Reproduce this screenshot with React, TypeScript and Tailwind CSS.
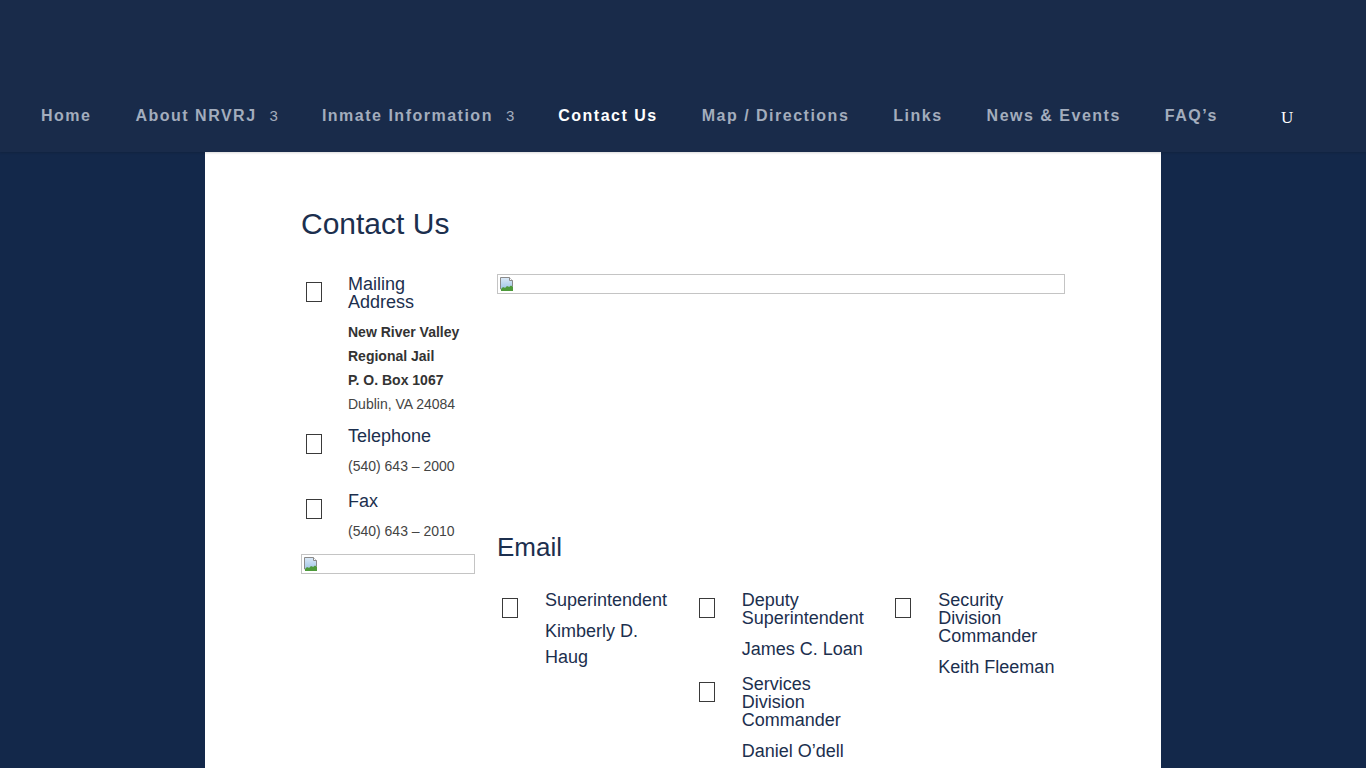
const navItems = [
	{ label: "Home" },
	{ label: "About NRVRJ", sub: true },
	{ label: "Inmate Information", sub: true },
	{ label: "Contact Us", active: true },
	{ label: "Map / Directions" },
	{ label: "Links" },
	{ label: "News & Events" },
	{ label: "FAQ’s" },
];

function BoxIcon() {
	return <span className="block w-[16px] h-[20px] border border-[#3a3a3a] bg-white" />;
}

function BrokenImage({ className }: { className?: string }) {
	return (
		<div className={`h-[20px] border border-[#c4c4c4] flex items-start ${className ?? ""}`}>
			<svg width="16" height="16" viewBox="0 0 16 16" className="mt-[1px] ml-[1px]">
				<defs>
					<linearGradient id="sky" x1="0" y1="0" x2="0" y2="1">
						<stop offset="0" stopColor="#dbe9f7" />
						<stop offset="1" stopColor="#9cc3e6" />
					</linearGradient>
				</defs>
				<path d="M1.5 1.5h9l3 3v6l-2 1.5-2-1-2 2-2-1-2 2-2-1z" fill="url(#sky)" stroke="#8a8a8a" />
				<path d="M2 13l2-2 2 1 2-2 2 1 2-1.5 2 1.5V15H2z" fill="#4d9a3a" />
				<path d="M10.5 1.5v3h3" fill="#fff" stroke="#8a8a8a" />
			</svg>
		</div>
	);
}

function InfoRow({
	title,
	children,
	indent = "w-[47px]",
	gap = "mb-[13px]",
}: {
	title: string[];
	children: React.ReactNode;
	indent?: string;
	gap?: string;
}) {
	return (
		<div className={`flex ${gap}`}>
			<div className={`${indent} shrink-0 pl-[5px] pt-[7px]`}>
				<BoxIcon />
			</div>
			<div>
				<div className="text-[18px] leading-[18px] text-[#1c2f4e] mb-[9px]">
					{title.map((t) => (
						<div key={t}>{t}</div>
					))}
				</div>
				{children}
			</div>
		</div>
	);
}

function EmailRow({ title, name }: { title: string[]; name: string[] }) {
	return (
		<InfoRow title={title} indent="w-[48px]">
			<div className="text-[18px] leading-[26px] text-[#1c2f4e]">
				{name.map((n) => (
					<div key={n}>{n}</div>
				))}
			</div>
		</InfoRow>
	);
}

export default function App() {
	return (
		<div
			className="min-h-[768px] bg-[#13284a]"
			style={{ fontFamily: '"Liberation Sans", Arial, sans-serif' }}
		>
			<header className="h-[152px] bg-[#192b4a] shadow-[0_1px_2px_rgba(0,0,0,0.15)] relative z-10">
				<nav className="flex items-center pt-[102px] pl-[41px] text-[16px] leading-[22px] font-bold tracking-[1.5px]">
					<ul className="flex gap-[44px]">
						{navItems.map((item) => (
							<li
								key={item.label}
								className={item.active ? "text-white" : "text-[#a3adbd]"}
							>
								{item.label}
								{item.sub && (
									<span className="ml-[13px] font-normal text-[15px] tracking-normal">3</span>
								)}
							</li>
						))}
					</ul>
					<span
						className="ml-[63px] mt-[5px] text-white text-[17px] font-normal tracking-normal"
						style={{ fontFamily: '"Liberation Serif", "Times New Roman", serif' }}
					>
						U
					</span>
				</nav>
			</header>

			<main className="w-[956px] mx-auto bg-white px-[96px] pt-[54px] pb-[40px] min-h-[616px]">
				<h1 className="text-[30px] leading-[36px] text-[#1c2f4e] mb-[32px]">Contact Us</h1>

				<div className="grid grid-cols-[174px_1fr] gap-x-[22px]">
					<div className="pt-[1px]">
						<InfoRow title={["Mailing", "Address"]} gap="mb-[11px]">
							<div className="text-[14px] leading-[24px] text-[#333]">
								<div className="font-bold">New River Valley</div>
								<div className="font-bold">Regional Jail</div>
								<div className="font-bold">P. O. Box 1067</div>
								<div className="text-[#444]">Dublin, VA 24084</div>
							</div>
						</InfoRow>
						<InfoRow title={["Telephone"]} gap="mb-[14px]">
							<div className="text-[14px] leading-[24px] text-[#444]">(540) 643 – 2000</div>
						</InfoRow>
						<InfoRow title={["Fax"]}>
							<div className="text-[14px] leading-[24px] text-[#444]">(540) 643 – 2010</div>
						</InfoRow>
						<BrokenImage className="mt-[-2px]" />
					</div>

					<div>
						<BrokenImage className="mb-[238px]" />
						<h2 className="text-[26px] leading-[30px] text-[#1c2f4e] mb-[29px]">Email</h2>
						<div className="grid grid-cols-3 gap-x-[22px]">
							<div>
								<EmailRow title={["Superintendent"]} name={["Kimberly D.", "Haug"]} />
							</div>
							<div>
								<EmailRow title={["Deputy", "Superintendent"]} name={["James C. Loan"]} />
								<EmailRow
									title={["Services", "Division", "Commander"]}
									name={["Daniel O’dell"]}
								/>
							</div>
							<div>
								<EmailRow
									title={["Security", "Division", "Commander"]}
									name={["Keith Fleeman"]}
								/>
							</div>
						</div>
					</div>
				</div>
			</main>
		</div>
	);
}
